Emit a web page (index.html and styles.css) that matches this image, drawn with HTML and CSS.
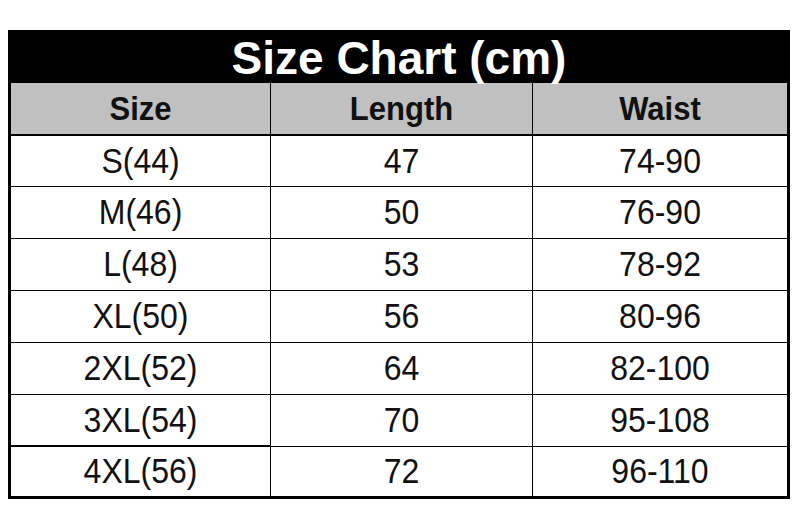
FILE: index.html
```html
<!DOCTYPE html>
<html>
<head>
<meta charset="utf-8">
<link rel="stylesheet" href="styles.css">
</head>
<body>
<div class="chart">
  <div class="title">Size Chart (cm)</div>
  <div class="row head"><div class="cell"><span>Size</span></div><div class="cell"><span>Length</span></div><div class="cell"><span>Waist</span></div></div>
  <div class="row first"><div class="cell"><span>S(44)</span></div><div class="cell"><span>47</span></div><div class="cell"><span>74-90</span></div></div>
  <div class="row"><div class="cell"><span>M(46)</span></div><div class="cell"><span>50</span></div><div class="cell"><span>76-90</span></div></div>
  <div class="row"><div class="cell"><span>L(48)</span></div><div class="cell"><span>53</span></div><div class="cell"><span>78-92</span></div></div>
  <div class="row"><div class="cell"><span>XL(50)</span></div><div class="cell"><span>56</span></div><div class="cell"><span>80-96</span></div></div>
  <div class="row"><div class="cell"><span>2XL(52)</span></div><div class="cell"><span>64</span></div><div class="cell"><span>82-100</span></div></div>
  <div class="row"><div class="cell"><span>3XL(54)</span></div><div class="cell"><span>70</span></div><div class="cell"><span>95-108</span></div></div>
  <div class="row last"><div class="cell"><span>4XL(56)</span></div><div class="cell"><span>72</span></div><div class="cell"><span>96-110</span></div></div>
</div>
</body>
</html>
```
FILE: styles.css
```css
html, body {
  margin: 0;
  padding: 0;
  background: #fff;
}
body {
  font-family: "Liberation Sans", Arial, sans-serif;
  color: #111;
}
.chart {
  margin: 30px 0 0 8px;
  width: 782px;
  border: 3px solid #000;
  box-sizing: border-box;
}
.title {
  background: #000;
  color: #fff;
  height: 50px;
  display: flex;
  align-items: center;
  justify-content: center;
  font-size: 46px;
  font-weight: bold;
  margin-top: -3px;
  padding-top: 3px;
}
.row {
  display: grid;
  grid-template-columns: 259px 262px 255px;
  border-top: 1px solid #000;
  height: 51px;
}
.row.head {
  background: #c0c0c0;
  height: 51px;
  border-top: 0;
  border-bottom: 2px solid #000;
}
.row.first {
  border-top: 0;
  height: 50px;
}
.row.last {
  height: 49px;
}
.row.last .cell:first-child {
  box-shadow: 0 -2px 0 #000;
}
.cell {
  display: flex;
  align-items: center;
  justify-content: center;
  font-size: 32px;
}
.cell span {
  display: inline-block;
  transform: scaleY(1.07);
}
.head .cell {
  font-size: 31px;
  font-weight: bold;
  color: #111;
}
.head .cell span {
  transform: scaleY(1.1);
}
.cell + .cell {
  border-left: 1px solid #000;
}
```
